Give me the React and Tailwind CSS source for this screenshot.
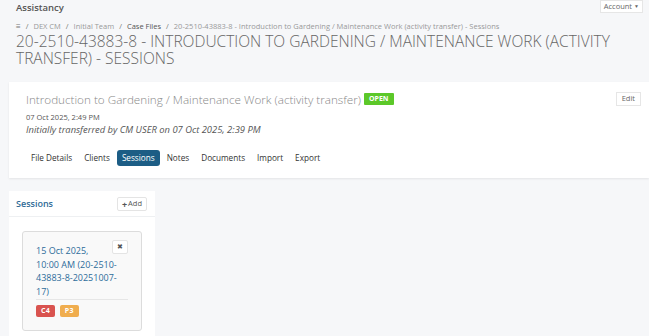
import React from 'react';

const tabs = ['File Details', 'Clients', 'Sessions', 'Notes', 'Documents', 'Import', 'Export'];

const crumbs = ['DEX CM', 'Initial Team', 'Case Files', '20-2510-43883-8 - Introduction to Gardening / Maintenance Work (activity transfer) - Sessions'];

const SessionCard = () => (
    <div className="relative mx-[13px] mt-[14px] rounded-[3px] border border-[#dcdcdc] bg-[#f9f9f9] px-[13px] pt-[12px] pb-[13px]">
        <button className="absolute right-[13px] top-[8px] flex h-[14px] w-[16px] items-center justify-center rounded-[2px] border border-[#e4e4e4] bg-white text-[7px] text-[#555]">✖</button>
        <p className="text-[9px] leading-[13.5px] text-[#2d6c9a]">
            15 Oct 2025,<br />10:00 AM (20-2510-<br />43883-8-20251007-<br />17)
        </p>
        <div className="mt-[1px] flex gap-[5px] border-t border-[#e6e6e6] pt-[5px]">
            <span className="rounded-[2px] bg-[#d9534f] px-[5px] text-[7px] font-bold leading-[12px] tracking-wide text-white">C4</span>
            <span className="rounded-[2px] bg-[#f0ad4e] px-[5px] text-[7px] font-bold leading-[12px] tracking-wide text-white">P3</span>
        </div>
    </div>
);

export default function App() {
    return (
        <div className="h-[336px] w-[649px] overflow-hidden bg-[#f6f7f9] pl-[9px] font-['Open_Sans',sans-serif]">
            <div className="flex items-start justify-between">
                <p className="pl-[7px] pt-[1px] text-[9.5px] font-semibold leading-[14px] text-[#555]">Assistancy</p>
                <button className="mr-[6px] flex h-[13px] items-center gap-[2px] border border-[#e6e6e6] bg-white px-[3px] text-[7.5px] text-[#666]">
                    Account <span className="text-[5px]">▼</span>
                </button>
            </div>

            <div className="mt-[6px] flex items-center pl-[7px] text-[7.5px] leading-[10px] text-[#999]">
                <span className="text-[8px] leading-none text-[#777]">≡</span>
                {crumbs.map((c, i) => (
                    <React.Fragment key={c}>
                        <span className="mx-[5px] text-[#777]">/</span>
                        <span className={i === 2 ? 'text-[#555]' : ''}>{c}</span>
                    </React.Fragment>
                ))}
            </div>

            <h1 className="mt-[2px] pl-[7px] pr-[16px] text-[15.5px] font-light leading-[17px] text-[#666]">
                20-2510-43883-8 - INTRODUCTION TO GARDENING / MAINTENANCE WORK (ACTIVITY TRANSFER) - SESSIONS
            </h1>

            <div className="mt-[15px] bg-white pl-[17px] pr-[8px] pt-[9px] pb-[12px] shadow-[0_1px_2px_rgba(0,0,0,0.08)]">
                <div className="flex items-center justify-between">
                    <div className="flex items-center gap-[3px]">
                        <span className="text-[11.7px] font-light leading-[16px] text-[#888]">Introduction to Gardening / Maintenance Work (activity transfer)</span>
                        <span className="rounded-[1px] bg-[#5cc829] px-[5px] text-[7px] font-bold leading-[12px] text-white">OPEN</span>
                    </div>
                    <button className="flex h-[14px] items-center border border-[#e6e6e6] bg-white px-[5px] text-[7.5px] text-[#666]">Edit</button>
                </div>
                <p className="mt-[5px] text-[7.5px] leading-[11px] text-[#555]">07 Oct 2025, 2:49 PM</p>
                <p className="text-[9.4px] italic leading-[13px] text-[#555]">Initially transferred by CM USER on 07 Oct 2025, 2:39 PM</p>
                <div className="mt-[14px] flex items-center gap-[2px]">
                    {tabs.map(t => (
                        <span
                            key={t}
                            className={`rounded-[3px] px-[5px] text-[8.2px] leading-[16px] ${t === 'Sessions' ? 'bg-[#1c5d85] text-white' : 'text-[#333]'}`}
                        >
                            {t}
                        </span>
                    ))}
                </div>
            </div>

            <div className="mt-[13px] w-[146px] bg-white pb-[10px]">
                <div className="flex items-center justify-between border-b border-[#eef0f2] pl-[7px] pr-[8px] pt-[6px] pb-[5px]">
                    <span className="text-[9px] font-semibold text-[#2f6b96]">Sessions</span>
                    <button className="flex h-[14px] items-center gap-[1px] rounded-[2px] border border-[#e4e4e4] bg-white px-[4px] text-[7.5px] text-[#555]">
                        <span className="text-[9px] font-bold leading-none">+</span>Add
                    </button>
                </div>
                <SessionCard />
            </div>
        </div>
    );
}
